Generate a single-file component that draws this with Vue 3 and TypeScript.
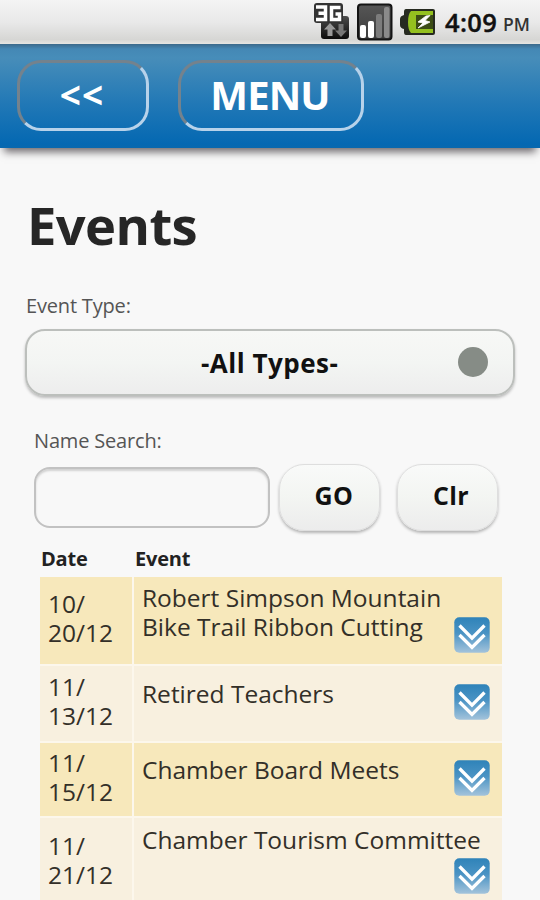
<script setup lang="ts">
interface EventRow {
  id: string
  date: string
  title: string
}

const events: EventRow[] = [
  { id: 'ribbon', date: '10/\n20/12', title: 'Robert Simpson Mountain\nBike Trail Ribbon Cutting' },
  { id: 'teachers', date: '11/\n13/12', title: 'Retired Teachers' },
  { id: 'board', date: '11/\n15/12', title: 'Chamber Board Meets' },
  { id: 'tourism', date: '11/\n21/12', title: 'Chamber Tourism Committee' },
]
</script>

<template>
  <main class="screen">
    <div class="status">
      <svg class="net" width="36" height="38" viewBox="0 0 36 38">
        <defs>
          <linearGradient id="dark" x1="0" y1="0" x2="0" y2="1">
            <stop offset="0" stop-color="#4c4c4c" />
            <stop offset="1" stop-color="#0c0c0c" />
          </linearGradient>
        </defs>
        <rect x="7" y="14" width="28" height="23" rx="3" fill="url(#dark)" />
        <rect x="0" y="1" width="29" height="20" rx="3" fill="#333" />
        <path d="M2 5H11.500V17.500H2M4.500 11.200H11M26.500 5.500H17.500V17.500H25.500V12H21.500" fill="none" stroke="#fff" stroke-width="3.500" />
        <path d="M16 21l6 6.500h-3.500V34h-5v-6.500H10z" fill="#999" />
        <path d="M27 35l6-6.500h-3.500V22h-5v6.500H21z" fill="#777" />
      </svg>
      <svg class="signal" width="36" height="38" viewBox="0 0 36 38">
        <defs>
          <linearGradient id="sig" x1="0" y1="0" x2="0" y2="1">
            <stop offset="0" stop-color="#565656" />
            <stop offset="1" stop-color="#3c3c3c" />
          </linearGradient>
        </defs>
        <rect x="1" y="1.500" width="33.500" height="35" rx="3" fill="url(#sig)" stroke="#141414" stroke-width="2" />
        <rect x="3" y="22" width="6" height="13" rx="2" fill="#fff" />
        <rect x="11" y="18" width="6" height="17" rx="2" fill="#fff" />
        <rect x="19" y="11" width="6" height="24" rx="2" fill="#7c7c7c" />
        <rect x="27" y="4" width="5.500" height="31" rx="2" fill="#8a8a8a" />
      </svg>
      <svg class="battery" width="36" height="28" viewBox="0 0 36 28">
        <path d="M6 1h27q2 0 2 2v22q0 2-2 2H6q-2 0-2-3v-3Q0 20 0 17v-6Q0 8 4 7V4q0-3 2-3z" fill="#262a20" />
        <path d="M11 3h22v4H16v14h17v4H11Q8 22 8 14T11 3z" fill="#94c11f" />
        <rect x="16" y="7" width="17" height="14" fill="#3c4d16" />
        <path d="M26 8l-8 6 5 1-5 5 12-6-5-1.500 5-5z" fill="#fff" stroke="#fff" stroke-width="0.800" />
      </svg>
      <span class="clock">4:09</span>
      <span class="meridiem">PM</span>
    </div>

    <header class="bar">
      <button class="nav back"><span>&lt;&lt;</span></button>
      <button class="nav menu"><span>MENU</span></button>
    </header>

    <h1 class="title">Events</h1>

    <div class="label type-label">Event Type:</div>
    <button class="select">
      <span class="select-text">-All Types-</span>
      <span class="dot"></span>
    </button>

    <div class="label search-label">Name Search:</div>
    <div class="search">
      <input class="field" type="text" />
      <button class="small go">GO</button>
      <button class="small clr">Clr</button>
    </div>

    <div class="heads">
      <span class="head">Date</span>
      <span class="head">Event</span>
    </div>
    <section class="table">
      <div v-for="e in events" :key="e.id" class="row" :class="e.id">
        <div class="date">{{ e.date }}</div>
        <div class="event">
          <div class="names">{{ e.title }}</div>
          <svg class="more" width="36" height="36" viewBox="0 0 36 36">
            <defs>
              <linearGradient :id="'m-' + e.id" x1="0" y1="0" x2="0" y2="1">
                <stop offset="0" stop-color="#2f83b9" />
                <stop offset="0.450" stop-color="#4a93c4" />
                <stop offset="1" stop-color="#a3c3db" />
              </linearGradient>
            </defs>
            <rect x="0.300" y="0.300" width="35.400" height="35.400" rx="5" :fill="'url(#m-' + e.id + ')'" />
            <path d="M5.500 8.500L18 21.200L30.500 8.500M5.500 18L18 30.500L30.500 18" fill="none" stroke="#fff" stroke-width="3.300" />
          </svg>
        </div>
      </div>
    </section>
  </main>
</template>

<style>
body {
  margin: 0;
  background: #f8f8f8;
}
</style>

<style scoped>
.screen {
  width: 540px;
  height: 900px;
  overflow: hidden;
  background: #f8f8f8;
  font-family: "Open Sans", "Noto Sans", sans-serif;
  color: #111;
}
.screen * {
  box-sizing: border-box;
}
button {
  font-family: inherit;
  padding: 0;
  margin: 0;
}
.status {
  height: 44px;
  display: flex;
  align-items: flex-start;
  padding-left: 314px;
  background: linear-gradient(#f4f4f4, #e9e9e9 50%, #d6d6d4 90%, #e6e6e2);
  white-space: nowrap;
}
.net {
  margin-top: 2px;
}
.signal {
  margin: 3px 0 0 7px;
}
.battery {
  margin: 8px 0 0 7px;
}
.clock {
  margin: 6px 0 0 9px;
  width: 58px;
  font-size: 25.500px;
  line-height: 32px;
  font-weight: 600;
  letter-spacing: 0.400px;
  -webkit-text-stroke: 0.400px #111;
}
.meridiem {
  margin-top: 8px;
  font-size: 17.500px;
  line-height: 32px;
  font-weight: 600;
  color: #333;
}
.bar {
  position: relative;
  height: 104px;
  display: flex;
  gap: 29px;
  padding: 16px 0 0 17px;
  background: linear-gradient(#3c6a8b 0, #4488b5 5px, #478db9 14px, #2178b6 60px, #0468b2 100px, #0868ae);
  box-shadow: 0 8px 8px -4px #6c686c;
}
.nav {
  height: 71px;
  border: 3px solid;
  border-color: #74828d #b7d2ea #b7d2ea #74828d;
  border-radius: 24px;
  background: transparent;
  color: #fff;
  font-weight: 700;
}
.back {
  width: 132px;
  padding-right: 2px;
  font-size: 37px;
  letter-spacing: 1px;
}
.menu {
  width: 186px;
  padding-right: 2px;
  font-size: 40px;
  letter-spacing: -0.900px;
}
.nav span {
  display: block;
  line-height: 60px;
  margin-top: -1px;
}
.title {
  margin: 40px 0 0 27px;
  font-size: 52.500px;
  line-height: 74px;
  font-weight: 700;
  letter-spacing: -0.600px;
  color: #262626;
}
.label {
  font-size: 20px;
  line-height: 28px;
  letter-spacing: -0.180px;
  color: #555;
}
.type-label {
  margin: 30px 0 0 26px;
}
.select {
  display: flex;
  align-items: center;
  width: 490px;
  height: 67px;
  margin: 9px 0 0 25px;
  padding: 0 25px 0 174px;
  border: 2px solid #bcbfbc;
  border-radius: 20px;
  background: linear-gradient(#f7f8f6, #f3f5f3 50%, #ededed);
  box-shadow: 0 2px 3px #bbb;
}
.select-text {
  flex: 1;
  text-align: left;
  font-size: 26px;
  line-height: 36px;
  font-weight: 700;
  letter-spacing: 0.500px;
  color: #111;
}
.dot {
  width: 30px;
  height: 30px;
  margin-top: -2px;
  border-radius: 50%;
  background: #868c86;
}
.search-label {
  margin: 31px 0 0 34px;
}
.search {
  height: 69px;
  margin: 8px 0 0 34px;
  display: flex;
}
.field {
  width: 236px;
  height: 61px;
  margin-top: 4px;
  border: 2px solid #c2c2c2;
  border-radius: 16px;
  background: #f8f8f8;
  box-shadow: inset 0 2px 2px #d2d2d2;
}
.small {
  width: 101px;
  height: 67px;
  margin-top: 1px;
  padding-bottom: 5px;
  border: 1px solid #dedede;
  border-radius: 25px;
  background: linear-gradient(#f9faf9, #f3f5f2 50%, #ececec);
  box-shadow: 0 2px 3px #b4b4b4;
  font-size: 25px;
  font-weight: 700;
  color: #111;
}
.go {
  margin-left: 9px;
  padding-left: 9px;
  letter-spacing: 0.500px;
}
.clr {
  margin-left: 17px;
  padding-left: 7px;
  letter-spacing: 0.300px;
}
.heads {
  display: grid;
  grid-template-columns: 94px 1fr;
  height: 45px;
  padding: 13px 0 0 41px;
}
.head {
  font-size: 20px;
  line-height: 28px;
  font-weight: 700;
  letter-spacing: -0.200px;
  color: #222;
}
.table {
  width: 462px;
  margin-left: 40px;
  display: flex;
  flex-direction: column;
  gap: 2px;
  background: #fcf7ec;
  font-size: 24.500px;
  line-height: 29px;
  color: #332f28;
}
.row {
  display: grid;
  grid-template-columns: 92px 368px;
  gap: 2px;
  flex: none;
  height: 73px;
}
.date,
.event {
  background: #f7e8bb;
}
.row:nth-child(even) .date,
.row:nth-child(even) .event {
  background: #f8f0df;
}
.date {
  padding: 5px 0 0 8px;
  white-space: pre-line;
}
.event {
  display: flex;
  padding-left: 8px;
}
.names {
  flex: none;
  width: 312px;
  padding-top: 12px;
  white-space: pre;
}
.more {
  flex: none;
  margin-top: 17px;
}
.ribbon {
  height: 87px;
}
.ribbon .date {
  padding-top: 12px;
}
.ribbon .names {
  padding-top: 6px;
}
.ribbon .more {
  margin-top: 40px;
}
.teachers {
  height: 75px;
}
.teachers .date {
  padding-top: 6px;
}
.teachers .names {
  padding-top: 13px;
}
.teachers .more {
  margin-top: 18px;
}
.tourism {
  height: 90px;
}
.tourism .date {
  padding-top: 13px;
}
.tourism .names {
  padding-top: 7px;
}
.tourism .more {
  margin-top: 40px;
}
</style>
